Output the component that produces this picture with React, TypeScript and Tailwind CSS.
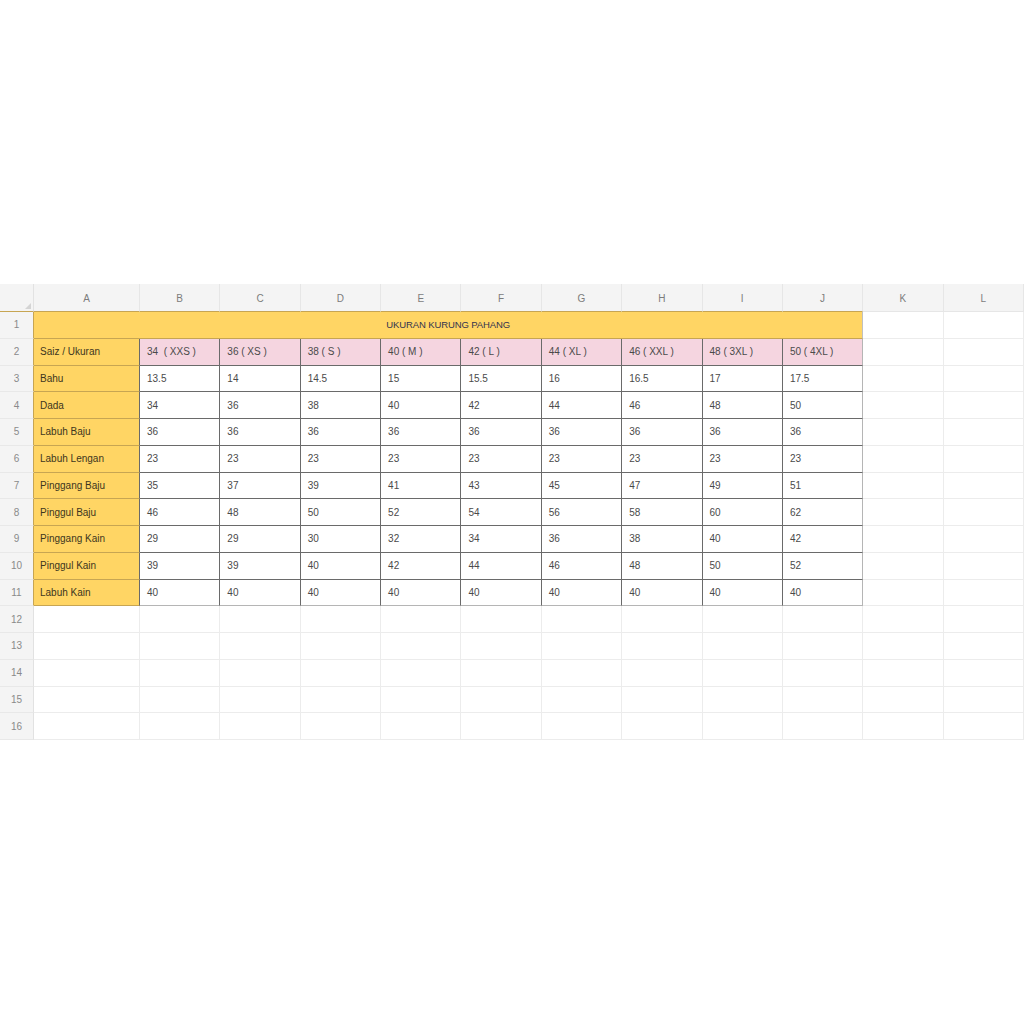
const cols = ["A", "B", "C", "D", "E", "F", "G", "H", "I", "J", "K", "L"];

const sizes = ["34  ( XXS )", "36 ( XS )", "38 ( S )", "40 ( M )", "42 ( L )", "44 ( XL )", "46 ( XXL )", "48 ( 3XL )", "50 ( 4XL )"];

const rows: [string, string[]][] = [
  ["Bahu", ["13.5", "14", "14.5", "15", "15.5", "16", "16.5", "17", "17.5"]],
  ["Dada", ["34", "36", "38", "40", "42", "44", "46", "48", "50"]],
  ["Labuh Baju", ["36", "36", "36", "36", "36", "36", "36", "36", "36"]],
  ["Labuh Lengan", ["23", "23", "23", "23", "23", "23", "23", "23", "23"]],
  ["Pinggang Baju", ["35", "37", "39", "41", "43", "45", "47", "49", "51"]],
  ["Pinggul Baju", ["46", "48", "50", "52", "54", "56", "58", "60", "62"]],
  ["Pinggang Kain", ["29", "29", "30", "32", "34", "36", "38", "40", "42"]],
  ["Pinggul Kain", ["39", "39", "40", "42", "44", "46", "48", "50", "52"]],
  ["Labuh Kain", ["40", "40", "40", "40", "40", "40", "40", "40", "40"]],
];

function RowNum({ n, table }: { n: number; table?: boolean }) {
  return (
    <div
      className={
        "flex items-center justify-center border-b border-r border-b-[#e8e8e8] bg-[#f4f4f4] text-[10px] text-[#8a8a8a] " +
        (table ? "border-r-[#c7a552]" : "border-r-[#e2e2e2]")
      }
    >
      {n}
    </div>
  );
}

function Empty() {
  return <div className="border-b border-r border-[#ececec] bg-white" />;
}

export default function App() {
  return (
    <div className="min-h-screen bg-white pt-[285px]" style={{ fontFamily: '"Liberation Sans", Arial, sans-serif' }}>
      <div className="-mt-px grid w-[1024px] grid-cols-[34px_106px_repeat(11,minmax(0,1fr))] grid-rows-[28px_repeat(16,26.75px)] text-[10px] text-[#3a3a3a]">
        {/* column header */}
        <div className="relative border-b border-r border-b-[#c7a552] border-r-[#e2e2e2] bg-[#f4f4f4]">
          <svg className="absolute bottom-[2px] right-[2px]" width="6" height="6" viewBox="0 0 6 6">
            <path d="M6 0 L6 6 L0 6 Z" fill="#d4d4d4" />
          </svg>
        </div>
        {cols.map((c, i) => (
          <div
            key={c}
            className={
              "flex items-center justify-center border-b border-r border-r-[#e6e6e6] bg-[#f4f4f4] pt-px text-[10px] text-[#7c7c7c] " +
              (i < 10 ? "border-b-[#c7a552]" : "border-b-[#e6e6e6]")
            }
          >
            {c}
          </div>
        ))}

        {/* row 1: title */}
        <RowNum n={1} table />
        <div className="col-span-10 flex items-center justify-center border-b border-r border-b-[#c7a552] border-r-[#c0c0c0] bg-[#ffd564] text-[9.5px] tracking-[-0.1px] text-[#33334f]">
          UKURAN KURUNG PAHANG
        </div>
        <Empty />
        <Empty />

        {/* row 2: sizes */}
        <RowNum n={2} table />
        <div className="flex items-center border-b border-r border-b-[#c7a552] border-r-[#6a6a6a] bg-[#ffd564] pl-[6px] text-[#3d3520]">
          Saiz / Ukuran
        </div>
        {sizes.map((s, i) => (
          <div
            key={s}
            className={
              "flex items-center whitespace-pre border-b border-r border-b-[#6a6a6a] bg-[#f5d5e0] pl-[7px] text-[#4a4a4a] " +
              (i === 8 ? "border-r-[#b5b5b5]" : "border-r-[#6a6a6a]")
            }
          >
            {s}
          </div>
        ))}
        <Empty />
        <Empty />

        {/* rows 3-11 */}
        {rows.map(([label, vals], r) => {
          const last = r === rows.length - 1;
          return [
            <RowNum key={label + "n"} n={r + 3} table />,
            <div
              key={label}
              className="flex items-center border-b border-r border-b-[#c7a552] border-r-[#6a6a6a] bg-[#ffd564] pl-[6px] text-[#3d3520]"
            >
              {label}
            </div>,
            ...vals.map((v, i) => (
              <div
                key={label + i}
                className={
                  "flex items-center border-b border-r bg-white pl-[7px] text-[#4a4a4a] " +
                  (last ? "border-b-[#b5b5b5] " : "border-b-[#6a6a6a] ") +
                  (i === 8 ? "border-r-[#b5b5b5]" : "border-r-[#6a6a6a]")
                }
              >
                {v}
              </div>
            )),
            <Empty key={label + "k"} />,
            <Empty key={label + "l"} />,
          ];
        })}

        {/* rows 12-16 empty */}
        {[12, 13, 14, 15, 16].map((n) => [
          <RowNum key={n + "n"} n={n} />,
          ...cols.map((c) => <Empty key={n + c} />),
        ])}
      </div>
    </div>
  );
}
